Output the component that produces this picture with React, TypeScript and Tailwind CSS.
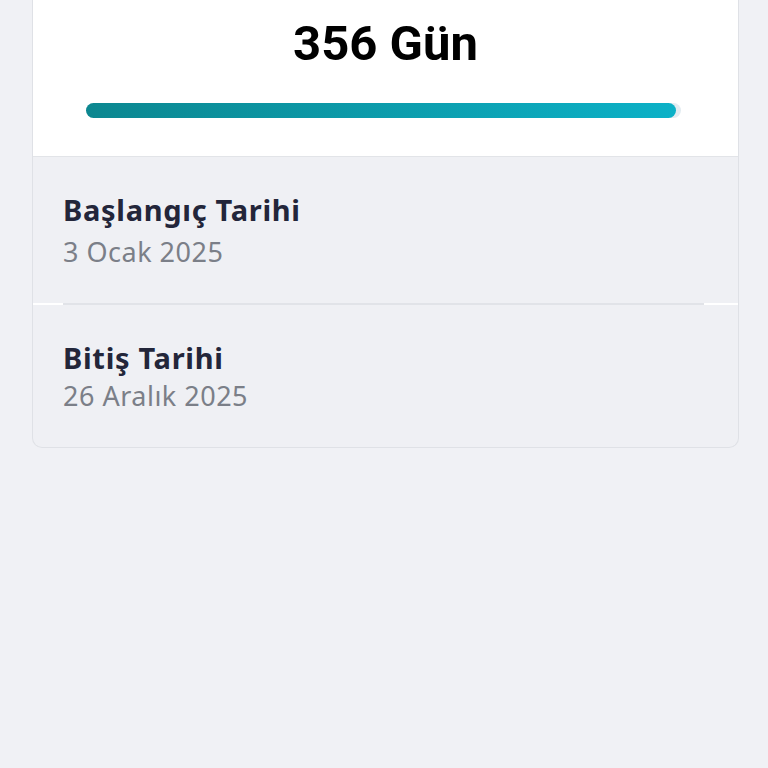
export default function App() {
  return (
    <div className="min-h-[768px] w-[768px] bg-[#f0f1f5] px-[32px]" style={{ fontFamily: "'Noto Sans', sans-serif" }}>
      <div className="w-[707px] overflow-hidden rounded-b-[10px] border-x border-b border-[#dfe1e6] bg-[#eff0f4]">
        <div className="h-[157px] border-b border-[#e2e4e8] bg-white pt-[14px]">
          <div className="text-center text-[49px] font-bold leading-[60px] text-black" style={{ fontFamily: "Roboto, sans-serif" }}>
            356 Gün
          </div>
          <div className="ml-[53px] mt-[29px] h-[15px] w-[595px] rounded-full bg-[#e3ecf1]">
            <div className="h-full w-[590px] rounded-full bg-gradient-to-r from-[#0c8790] to-[#0cb1c7]" />
          </div>
        </div>
        <div className="flex h-[146px] flex-col justify-center pl-[30px]">
          <div className="text-[29px] font-bold leading-[38px] tracking-[0.7px] text-[#23263a]">Başlangıç Tarihi</div>
          <div className="mt-[6px] text-[27px] leading-[34px] tracking-[0.5px] text-[#7b7f88]">3 Ocak 2025</div>
        </div>
        <div className="h-[2px] bg-white">
          <div className="ml-[30px] mr-[34px] h-full bg-[#e1e3e8]" />
        </div>
        <div className="flex h-[142px] flex-col justify-center pl-[30px]">
          <div className="text-[29px] font-bold leading-[38px] tracking-[0.7px] text-[#23263a]">Bitiş Tarihi</div>
          <div className="mt-[2px] text-[27px] leading-[34px] tracking-[0.5px] text-[#7b7f88]">26 Aralık 2025</div>
        </div>
      </div>
    </div>
  );
}
